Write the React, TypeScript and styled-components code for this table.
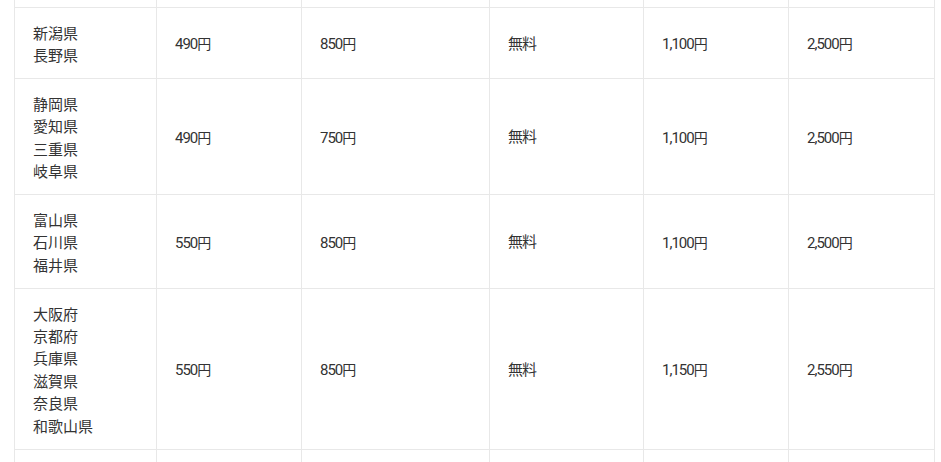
import styled, { createGlobalStyle } from "styled-components";

const GlobalStyle = createGlobalStyle`
  html, body {
    margin: 0;
    padding: 0;
    background: #fff;
  }
  body {
    font-family: "Noto Sans CJK JP", "Noto Sans", sans-serif;
    color: #333;
  }
`;

interface AreaRate {
  areas: string[];
  small: string;
  medium: string;
  extra: string;
  large: string;
  xlarge: string;
}

const rates: AreaRate[] = [
  { areas: ["新潟県", "長野県"], small: "490円", medium: "850円", extra: "無料", large: "1,100円", xlarge: "2,500円" },
  { areas: ["静岡県", "愛知県", "三重県", "岐阜県"], small: "490円", medium: "750円", extra: "無料", large: "1,100円", xlarge: "2,500円" },
  { areas: ["富山県", "石川県", "福井県"], small: "550円", medium: "850円", extra: "無料", large: "1,100円", xlarge: "2,500円" },
  { areas: ["大阪府", "京都府", "兵庫県", "滋賀県", "奈良県", "和歌山県"], small: "550円", medium: "850円", extra: "無料", large: "1,150円", xlarge: "2,550円" },
];

const colWidths = [142, 145, 188, 154, 145, 146];

const Viewport = styled.div`
  height: 462px;
  overflow: hidden;
  padding: 0 14px;
`;

const Table = styled.table`
  width: 921px;
  border-collapse: collapse;
  table-layout: fixed;
`;

// rows cut off by the top / bottom edge of the view
const EdgeRow = styled.tr<{ $h: number }>`
  height: ${(p) => p.$h}px;
`;

const EdgeCell = styled.td`
  border: 1px solid #e8e8e8;
  border-top: none;
  padding: 0;
`;

const Cell = styled.td<{ $num?: boolean }>`
  border: 1px solid #e8e8e8;
  padding: 14px 18px 11.5px;
  vertical-align: middle;
  text-align: left;
  font-size: 15px;
  line-height: 22.4px;
  font-family: ${(p) =>
    p.$num
      ? `Roboto, "Noto Sans CJK JP", sans-serif`
      : `"Noto Sans CJK JP", sans-serif`};
  letter-spacing: ${(p) => (p.$num ? "-1px" : "0")};
  color: #333;
`;

const AreaLine = styled.div`
  white-space: nowrap;
`;

const Yen = styled.span`
  font-family: "Noto Sans CJK JP", sans-serif;
  font-size: 14px;
  letter-spacing: 0;
`;

const Price = ({ value }: { value: string }) => {
  if (!value.endsWith("円")) return <>{value}</>;
  return (
    <>
      {value.slice(0, -1)}
      <Yen>円</Yen>
    </>
  );
};

const EdgeCells = () => (
  <>
    {colWidths.map((_, i) => (
      <EdgeCell key={i} />
    ))}
  </>
);

export default function App() {
  return (
    <>
      <GlobalStyle />
      <Viewport>
        <Table>
          <colgroup>
            {colWidths.map((w, i) => (
              <col key={i} style={{ width: w }} />
            ))}
          </colgroup>
          <tbody>
            <EdgeRow $h={7}>
              <EdgeCells />
            </EdgeRow>
            {rates.map((r, i) => (
              <tr key={i}>
                <Cell>
                  {r.areas.map((a) => (
                    <AreaLine key={a}>{a}</AreaLine>
                  ))}
                </Cell>
                <Cell $num><Price value={r.small} /></Cell>
                <Cell $num><Price value={r.medium} /></Cell>
                <Cell $num><Price value={r.extra} /></Cell>
                <Cell $num><Price value={r.large} /></Cell>
                <Cell $num><Price value={r.xlarge} /></Cell>
              </tr>
            ))}
            <EdgeRow $h={30}>
              <EdgeCells />
            </EdgeRow>
          </tbody>
        </Table>
      </Viewport>
    </>
  );
}
